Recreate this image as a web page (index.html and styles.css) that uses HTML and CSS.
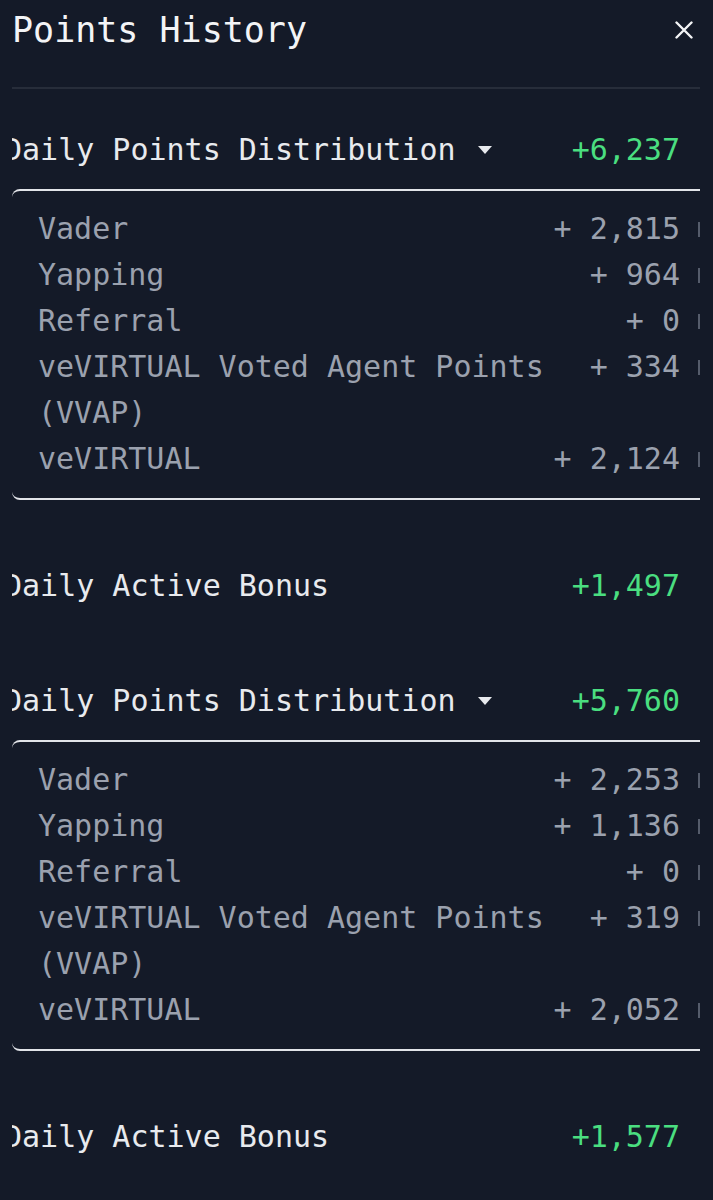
FILE: index.html
```html
<!DOCTYPE html>
<html lang="en">
<head>
<meta charset="utf-8">
<title>Points History</title>
<link rel="stylesheet" href="styles.css">
</head>
<body>
<div class="panel">
  <div class="top">
    <h1 class="title">Points History</h1>
    <button class="close" aria-label="Close">
      <svg width="18" height="18" viewBox="0 0 18 18"><path d="M1.5 1.5 L16.5 16.5 M16.5 1.5 L1.5 16.5" stroke="#f3f4f6" stroke-width="2.4" stroke-linecap="round" fill="none"/></svg>
    </button>
  </div>
  <div class="divider"></div>
  <div class="list">
    <div class="group">
      <div class="line-head">
        <span class="head-label">Daily Points Distribution</span>
        <svg class="caret" width="16" height="8" viewBox="0 0 16 8"><path d="M1 0 H15 L8 8 Z" fill="#e8eaee"/></svg>
        <span class="total">+6,237</span>
      </div>
      <div class="box">
        <div class="item"><span class="label">Vader</span><span class="val">+ 2,815</span></div>
        <div class="item"><span class="label">Yapping</span><span class="val">+ 964</span></div>
        <div class="item"><span class="label">Referral</span><span class="val">+ 0</span></div>
        <div class="item"><span class="label">veVIRTUAL Voted Agent Points (VVAP)</span><span class="val">+ 334</span></div>
        <div class="item"><span class="label">veVIRTUAL</span><span class="val">+ 2,124</span></div>
      </div>
      <div class="line-head bonus">
        <span class="head-label">Daily Active Bonus</span>
        <span class="total">+1,497</span>
      </div>
    </div>
    <div class="group">
      <div class="line-head">
        <span class="head-label">Daily Points Distribution</span>
        <svg class="caret" width="16" height="8" viewBox="0 0 16 8"><path d="M1 0 H15 L8 8 Z" fill="#e8eaee"/></svg>
        <span class="total">+5,760</span>
      </div>
      <div class="box">
        <div class="item"><span class="label">Vader</span><span class="val">+ 2,253</span></div>
        <div class="item"><span class="label">Yapping</span><span class="val">+ 1,136</span></div>
        <div class="item"><span class="label">Referral</span><span class="val">+ 0</span></div>
        <div class="item"><span class="label">veVIRTUAL Voted Agent Points (VVAP)</span><span class="val">+ 319</span></div>
        <div class="item"><span class="label">veVIRTUAL</span><span class="val">+ 2,052</span></div>
      </div>
      <div class="line-head bonus">
        <span class="head-label">Daily Active Bonus</span>
        <span class="total">+1,577</span>
      </div>
    </div>
  </div>
</div>
</body>
</html>
```

FILE: styles.css
```css
html, body {
  margin: 0;
  padding: 0;
  background: #141a28;
}

body {
  font-family: "DejaVu Sans Mono", "Liberation Mono", monospace;
  color: #e8eaee;
}

.panel {
  padding: 0 13px 0 12px;
  min-height: 1200px;
  box-sizing: border-box;
}

.top {
  display: flex;
  align-items: center;
  justify-content: space-between;
  height: 60px;
}

.title {
  margin: 0;
  font-size: 35px;
  font-weight: normal;
  line-height: 60px;
  color: #f3f4f6;
}

.close {
  background: none;
  border: 0;
  padding: 0;
  margin-right: 7px;
  width: 18px;
  height: 18px;
  display: flex;
}

.divider {
  margin-top: 27px;
  height: 2px;
  background: #272d3a;
}

.list {
  overflow: hidden;
  padding-top: 38px;
}

.group + .group {
  margin-top: 69px;
}

.line-head {
  display: flex;
  align-items: center;
  margin-left: -8px;
  padding-right: 20px;
  font-size: 30px;
  line-height: 46px;
  color: #e8eaee;
}

.caret {
  margin-left: 21px;
  flex: none;
}

.total {
  margin-left: auto;
  color: #4ade80;
}

.box {
  margin-top: 16px;
  margin-right: -20px;
  border-top: 2px solid #e2e4e9;
  border-bottom: 2px solid #e2e4e9;
  border-radius: 8px;
  padding: 15px 20px 16px 26px;
}

.item {
  display: flex;
  align-items: flex-start;
  font-size: 30px;
  line-height: 46px;
  color: #9ba1ae;
}

.label {
  flex: 1;
  padding-right: 16px;
}

.val {
  white-space: nowrap;
}

.item::after {
  content: "";
  flex: none;
  width: 2px;
  height: 15px;
  margin-top: 16px;
  margin-left: 18px;
  background: #555c6b;
}

.bonus {
  margin-top: 63px;
}
```
